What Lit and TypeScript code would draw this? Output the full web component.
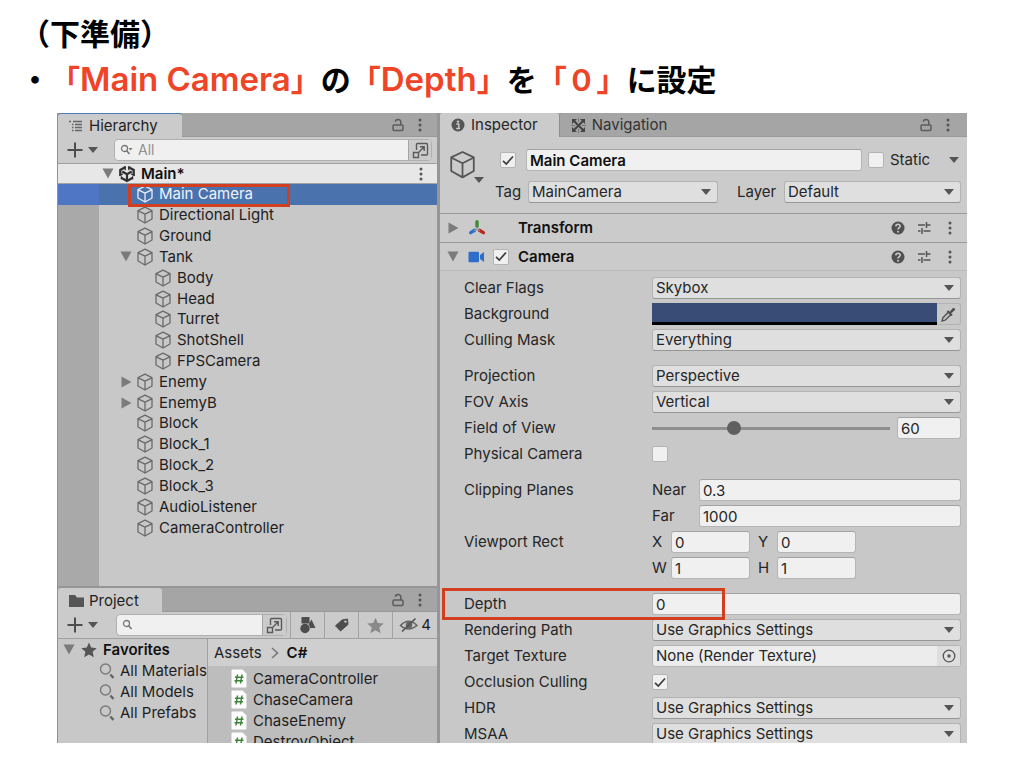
import { LitElement, html, svg, css, nothing } from "lit";
import { customElement, property } from "lit/decorators.js";
import { classMap } from "lit/directives/class-map.js";
import { styleMap } from "lit/directives/style-map.js";

/* ---------- icons ---------- */

const icon = (w: number, h: number, body: unknown, box = `0 0 ${w} ${h}`) =>
  html`<svg width=${w} height=${h} viewBox=${box} aria-hidden="true">${body}</svg>`;

const cube = (size: number, color: string, w = 1.3) =>
  icon(size, size, svg`<path d="M9 1.2 16 4.6V13L9 17 2 13V4.6ZM2.2 4.8 9 8.2 15.8 4.8M9 8.2V16.8" fill="none" stroke=${color} stroke-width=${w} stroke-linejoin="round"/>`, "0 0 18 18");
const caretDown = () => icon(10, 6, svg`<path d="M0 0H10L5 6Z" fill="#555"/>`);
const foldOpen = () => icon(12, 11, svg`<path d="M0.500 0.500H11.500L6 10.500Z" fill="#7b7b7b"/>`);
const foldShut = () => icon(11, 12, svg`<path d="M0.500 0.500V11.500L10.500 6Z" fill="#7b7b7b"/>`);
const lock = () => icon(12, 14, svg`<rect x="1" y="7" width="10" height="5.600" rx="1" fill="none" stroke="#5c5c5c" stroke-width="1.500"/><path d="M3.300 3.800C3.500 1 8.800.6 8.800 3.800V7" fill="none" stroke="#5c5c5c" stroke-width="1.500"/>`);
const dots = () => icon(4, 14, svg`<g fill="#555"><circle cx="2" cy="2" r="1.500"/><circle cx="2" cy="7" r="1.500"/><circle cx="2" cy="12" r="1.500"/></g>`);
const listIcon = () => icon(14, 12, svg`<path d="M0 1.500H2M4 1.500H13M3 4.500H4.500M6 4.500H13M3 7.500H4.500M6 7.500H13M3 10.500H4.500M6 10.500H13" stroke="#666" stroke-width="1.300"/>`);
const folder = () => icon(17, 14, svg`<path d="M1 1H7L9 3.500H16V13H1Z" fill="#555"/>`);
const plus = () => icon(16, 16, svg`<path d="M8 .5V15.500M.5 8H15.500" stroke="#4d4d4d" stroke-width="2"/>`);
const smallSearch = (menu: boolean) => icon(13, 12, svg`<circle cx="4.500" cy="4.500" r="3" fill="none" stroke="#777" stroke-width="1.300"/><path d="M6.600 6.800 9.600 10" stroke="#777" stroke-width="1.600"/>${menu ? svg`<path d="M8.500 4H12.500L10.500 6.500Z" fill="#777"/>` : nothing}`);
const bigSearch = () => icon(17, 17, svg`<circle cx="6.500" cy="7" r="5" fill="none" stroke="#7a7a7a" stroke-width="1.400"/><path d="M11.300 12.500 14.500 15.800" stroke="#666" stroke-width="2.400"/>`);
const popOut = () => icon(17, 17, svg`<path d="M4.500 8V2.500Q4.500 1.500 5.500 1.500H14.500Q15.500 1.500 15.500 2.500V12Q15.500 13 14.500 13H9M1.500 10.500H6.500V15.500H1.500ZM7 10 12 5M8 4.800H12.200V9" fill="none" stroke="#5a5a5a" stroke-width="1.400"/>`);
const unity = () => icon(18, 18, svg`<path d="M9 9.200V15M9 9.200 4.300 6.500M9 9.200 13.700 6.500" fill="none" stroke="#2f2f2f" stroke-width="2.200"/><path d="M7.600 2 2.300 5V10.400M10.400 2 15.700 5V10.400M3.200 12.700 9 16 14.800 12.700" fill="none" stroke="#2f2f2f" stroke-width="2.300"/><path d="M7.200 1.200V5.200M10.800 1.200V5.200M1.300 10.800 4.800 8.900M16.700 10.800 13.200 8.900M3.400 14.200V11.200M14.600 14.200V11.200" stroke="#2f2f2f" stroke-width="1.300"/>`);
const star = (size: number, color: string) => icon(size, size, svg`<path d="M8 .6 10.200 5.600 15.700 6.200 11.600 9.800 12.800 15.200 8 12.400 3.200 15.200 4.400 9.800.3 6.200 5.800 5.600Z" fill=${color}/>`, "0 0 16 16");
const info = () => icon(14, 14, svg`<circle cx="7" cy="7" r="6.500" fill="#555"/><circle cx="7" cy="3.600" r="1.200" fill="#cbcbcb"/><path d="M5.300 6H7.800V10.300M5.200 10.500H9" fill="none" stroke="#cbcbcb" stroke-width="1.400"/>`);
const navIcon = () => icon(15, 15, svg`<path d="M1 1H6L1 6ZM14 1V6L9 1ZM1 14V9L6 14ZM14 14H9L14 9Z" fill="#444"/><path d="M3 3 12 12M12 3 3 12" stroke="#444" stroke-width="2"/><path d="M7.500 0V4M7.500 11V15M0 7.500H4M11 7.500H15" stroke="#777" stroke-width="1"/>`);
const help = () => icon(14, 14, svg`<circle cx="7" cy="7" r="6.500" fill="#505050"/><path d="M4.800 5.400C4.900 2.600 9.300 2.700 9.200 5.200 9.100 6.700 7 6.700 7 8.600" fill="none" stroke="#cbcbcb" stroke-width="1.600"/><circle cx="7" cy="10.800" r="1" fill="#cbcbcb"/>`);
const presets = () => icon(14, 14, svg`<path d="M1 4H8M11 4H13.500M9.500 1V7M1 10H3.500M6.500 10H13.500M5 7V13M11 4H9" stroke="#555" stroke-width="1.500"/>`);
const axes = () => icon(18, 18, svg`<g stroke-width="3.400" stroke-linecap="round"><path d="M9 2.800V7.300" stroke="#3f8a34"/><path d="M6.600 11.300 2.700 13.600" stroke="#2f6fd0"/><path d="M11.400 11.300 15.400 13.600" stroke="#b72a22"/></g><path d="M9 8V10L6 11.700M9 10 12 11.700" stroke="#999" fill="none" stroke-width="1.200"/>`);
const cam = () => icon(17, 12, svg`<rect x=".5" y=".8" width="10.500" height="10.400" rx="1" fill="#2f6dcb"/><path d="M12 4 16 1V11L12 8Z" fill="#2f6dcb"/>`);
const tick = () => icon(12, 11, svg`<path d="M1 5.800 4.300 9 11 1.500" fill="none" stroke="#3c3c3c" stroke-width="1.700"/>`);
const dropper = () => icon(15, 15, svg`<path d="M1 14 2 10.500 7.500 5 10 7.500 4.500 13Z" fill="#bdbdbd" stroke="#4f4f4f" stroke-width="1.300"/><path d="M6.500 4 11 8.500M9 6 12.500 2.500" stroke="#4f4f4f" stroke-width="2"/><path d="M9.500 4 12 1Q14.500.5 14 3L11 5.500Z" fill="#4f4f4f"/>`);
const target = () => icon(14, 14, svg`<circle cx="7" cy="7" r="5.800" fill="none" stroke="#555" stroke-width="1.300"/><circle cx="7" cy="7" r="1.700" fill="#555"/>`);
const shapes = () => icon(17, 18, svg`<rect x="2.500" y="1" width="8" height="6.500" fill="#4d4d4d"/><circle cx="6" cy="12.500" r="4.700" fill="#4d4d4d"/><path d="M12.500 3.500 16.500 12H11Q10.800 9 9.500 8.500Z" fill="#4d4d4d"/>`);
const tag = () => icon(16, 16, svg`<path d="M8 3 13.500 2 14 7.500 6.500 14 1.500 8.800Z" fill="#4d4d4d" stroke="#4d4d4d" stroke-linejoin="round"/><circle cx="11.500" cy="4.600" r="1.200" fill="#cbcbcb"/>`);
const eyeOff = () => icon(20, 16, svg`<path d="M1.500 8.500Q9.500 0 18 8.500 9.500 15.500 1.500 8.500Z" fill="none" stroke="#666" stroke-width="1.600"/><circle cx="10" cy="8" r="3.300" fill="#666"/><path d="M3 14.500 16.500 1.500" stroke="#555" stroke-width="1.700"/>`);
const chevron = () => icon(9, 12, svg`<path d="M2 1 7.500 6 2 11" fill="none" stroke="#777" stroke-width="1.600"/>`);
const script = () => icon(16, 19, svg`<path d="M.5 1.500Q.5.500 1.500.500H11.500L15.500 4.500V17.500Q15.500 18.500 14.500 18.500H1.500Q.5 18.500.5 17.500Z" fill="#fdfdfd"/><path d="M6.500 5.500 5 14.500M11 5.500 9.500 14.500M4 8.300H12.500M3.500 11.700H12" stroke="#3d853a" stroke-width="1.500"/>`);

/* ---------- shared look ---------- */

const base = css`
  :host { display: block; box-sizing: border-box; }
  *, *::before, *::after { box-sizing: border-box; }
  svg { display: block; flex: none; }
  button, input, select { font: inherit; color: inherit; margin: 0; padding: 0; border: 0; background: none; border-radius: 0; outline: none; min-width: 0; }
  button { display: flex; align-items: center; justify-content: center; flex: none; }
  .tabs { display: flex; height: 24px; background: #a5a5a5; border-bottom: 1px solid #999; }
  .tab { height: 24px; background: #cbcbcb; border-radius: 3px 3px 0 0; gap: 6px; padding: 0 12px; }
  .tab.idle { background: none; color: #333; }
  .tools { display: flex; align-items: center; gap: 14px; margin-left: auto; padding-right: 15px; }
  .tick { display: grid; place-items: center; width: 16px; height: 16px; flex: none; }
  .tick > * { grid-area: 1 / 1; }
  .tick input { appearance: none; width: 16px; height: 16px; background: #f0f0f0; border: 1px solid #b4b4b4; border-radius: 2px; }
  .tick svg { pointer-events: none; }
`;

const tickBox = (id: string, label: string | null, on: boolean) => html`<span class="tick">
  <input type="checkbox" id=${id} aria-label=${label ?? nothing} .checked=${on} />${on ? tick() : nothing}</span>`;

/* ---------- hierarchy ---------- */

interface Node { name: string; depth: number; open?: boolean; }

@customElement("hierarchy-pane")
class HierarchyPane extends LitElement {
  static styles = [base, css`
    :host { background: #c8c8c8; display: flex; flex-direction: column; border-left: 1px solid #929292; min-height: 0; overflow: hidden; }
    .tab.on { border-top: 1px solid #4c7bc0; padding: 0 24px 0 11px; }
    .bar { display: flex; align-items: center; height: 27px; padding: 0 5px 0 8px; background: #cbcbcb; border-bottom: 1px solid #a0a0a0; }
    .add { gap: 5px; width: 32px; }
    .search { display: flex; align-items: center; flex: 1; height: 22px; margin-left: 16px; background: #f0f0f0; border: 1px solid #b0b0b0; border-radius: 4px; padding-left: 5px; gap: 5px; min-width: 0; }
    .search input { flex: 1; font-size: 14px; line-height: 18px; }
    .search input::placeholder { color: #909090; opacity: 1; }
    .pop { width: 23px; height: 20px; background: #cbcbcb; border-left: 1px solid #a5a5a5; border-radius: 0 4px 4px 0; }
    .tree { list-style: none; margin: 0; padding: 0; display: grid; grid-auto-rows: 1fr; height: 354px; }
    .rest { background: linear-gradient(90deg, #a9a9a9 41px, #c8c8c8 41px); flex: 1; }
    .row { position: relative; display: flex; align-items: center; height: 100%; white-space: nowrap; }
    .row.scene { height: 20px; background: #e7e7e7; border-bottom: 1px solid #a3a3a3; font-weight: 600; color: #111; padding-right: 14px; }
    .row.scene .dots { margin-left: auto; }
    .row.sel { background: linear-gradient(90deg, #4f76c4 41px, #4a72ad 41px); color: #f0f4fa; }
    .fold { width: 18px; display: flex; justify-content: center; }
    .glyph { width: 18px; margin: 0 5px 0 1px; }
    .mark { position: absolute; left: 70px; top: 0; width: 162px; height: 23px; border: 3px solid #d23f20; z-index: 1; pointer-events: none; }
  `];

  private nodes: Node[] = [
    { name: "Main Camera", depth: 1 }, { name: "Directional Light", depth: 1 }, { name: "Ground", depth: 1 },
    { name: "Tank", depth: 1, open: true }, { name: "Body", depth: 2 }, { name: "Head", depth: 2 },
    { name: "Turret", depth: 2 }, { name: "ShotShell", depth: 2 }, { name: "FPSCamera", depth: 2 },
    { name: "Enemy", depth: 1, open: false }, { name: "EnemyB", depth: 1, open: false },
    { name: "Block", depth: 1 }, { name: "Block_1", depth: 1 }, { name: "Block_2", depth: 1 },
    { name: "Block_3", depth: 1 }, { name: "AudioListener", depth: 1 }, { name: "CameraController", depth: 1 },
  ];

  render() {
    return html`
      <div class="tabs">
        <button class="tab on">${listIcon()}Hierarchy</button>
        <div class="tools"><button aria-label="Lock">${lock()}</button><button aria-label="Menu">${dots()}</button></div>
      </div>
      <div class="bar">
        <button class="add" aria-label="Create">${plus()}${caretDown()}</button>
        <div class="search">${smallSearch(true)}<input type="text" aria-label="Search hierarchy" placeholder="All" />
          <button class="pop" aria-label="Open search">${popOut()}</button></div>
      </div>
      <div class="row scene" style=${styleMap({ paddingLeft: "41px" })}>
        <span class="fold">${foldOpen()}</span><span class="glyph">${unity()}</span>Main*
        <button class="dots" aria-label="Scene menu">${dots()}</button>
      </div>
      <div class="rest"><ul class="tree">
        ${this.nodes.map((n, i) => html`<li class=${classMap({ row: true, sel: i === 0 })} style=${styleMap({ paddingLeft: `${41 + 18 * n.depth}px` })}>
          <span class="fold">${n.open === undefined ? nothing : n.open ? foldOpen() : foldShut()}</span>
          <span class="glyph">${cube(18, i === 0 ? "#e6eefa" : "#6a6a6a")}</span>${n.name}
          ${i === 0 ? html`<span class="mark"></span>` : nothing}
        </li>`)}
      </ul></div>`;
  }
}

/* ---------- project ---------- */

@customElement("project-pane")
class ProjectPane extends LitElement {
  static styles = [base, css`
    :host { background: #c8c8c8; display: flex; flex-direction: column; border-left: 1px solid #929292; min-height: 0; overflow: hidden; }
    .tab.on { padding: 2px 23px 0 10px; gap: 4px; }
    .bar { display: flex; align-items: stretch; height: 27px; padding-left: 8px; background: #cbcbcb; border-bottom: 1px solid #a0a0a0; }
    .add { gap: 5px; width: 32px; }
    .search { display: flex; align-items: center; flex: 1; height: 22px; margin: 2px 3px 0 18px; background: #f0f0f0; border: 1px solid #b0b0b0; border-radius: 4px; padding-left: 5px; min-width: 0; }
    .search input { flex: 1; }
    .pop { width: 24px; height: 20px; background: #cbcbcb; border-left: 1px solid #a5a5a5; border-radius: 0 4px 4px 0; }
    .cell { width: 34px; border-left: 1px solid #a3a3a3; }
    .cell.wide { width: 45px; gap: 2px; }
    .split { display: grid; grid-template-columns: 150px 1fr; flex: 1; min-height: 0; }
    ul { list-style: none; margin: 0; padding: 0; }
    li { display: flex; align-items: center; height: 21px; white-space: nowrap; overflow: hidden; }
    .favs { overflow: hidden; border-right: 1px solid #a0a0a0; }
    .favs li { padding-left: 41px; gap: 4px; }
    .favs li.head { padding-left: 5px; gap: 6px; font-weight: 600; color: #111; }
    .files { background: #bdbdbd; overflow: hidden; min-width: 0; }
    .crumbs { display: flex; align-items: center; gap: 8px; height: 27px; padding-left: 6px; background: #cfcfcf; color: #222; }
    .crumbs a { color: inherit; text-decoration: none; }
    .crumbs strong { font-weight: 600; color: #111; }
    .files ul { padding-top: 2px; }
    .files li { padding-left: 23px; gap: 6px; }
  `];

  render() {
    return html`
      <div class="tabs">
        <button class="tab on">${folder()}Project</button>
        <div class="tools"><button aria-label="Lock">${lock()}</button><button aria-label="Menu">${dots()}</button></div>
      </div>
      <div class="bar">
        <button class="add" aria-label="Create">${plus()}${caretDown()}</button>
        <div class="search">${smallSearch(false)}<input type="text" aria-label="Search project" />
          <button class="pop" aria-label="Open search">${popOut()}</button></div>
        <button class="cell" aria-label="Search by type">${shapes()}</button>
        <button class="cell" aria-label="Search by label">${tag()}</button>
        <button class="cell" aria-label="Save search">${star(17, "#8a8a8a")}</button>
        <button class="cell wide" aria-label="Hidden packages">${eyeOff()}4</button>
      </div>
      <div class="split">
        <ul class="favs">
          <li class="head">${foldOpen()}${star(16, "#555")}Favorites</li>
          ${["All Materials", "All Models", "All Prefabs"].map((t) => html`<li>${bigSearch()}${t}</li>`)}
        </ul>
        <div class="files">
          <nav class="crumbs"><a href="#assets">Assets</a>${chevron()}<strong>C#</strong></nav>
          <ul>${["CameraController", "ChaseCamera", "ChaseEnemy", "DestroyObject"].map((t) => html`<li>${script()}${t}</li>`)}</ul>
        </div>
      </div>`;
  }
}

/* ---------- inspector ---------- */

@customElement("inspector-pane")
class InspectorPane extends LitElement {
  static styles = [base, css`
    :host { background: #c8c8c8; min-height: 0; min-width: 0; overflow: hidden; color: #262626; }
    .tab.on { padding: 0 21px 0 11px; }
    .tab.idle { padding: 0 11px; border-left: 1px solid #8f8f8f; }
    .tools { padding-right: 17px; }
    input[type="text"] { width: 100%; height: 22px; line-height: 20px; background: #f0f0f0; border: 1px solid #b5b5b5; border-top-color: #a2a2a2; border-radius: 3px; padding: 0 3px; }
    .pick { display: grid; align-items: center; min-width: 0; flex: 1; }
    .pick > * { grid-area: 1 / 1; }
    .pick select { appearance: none; width: 100%; height: 22px; line-height: 20px; background: #dfdfdf; border: 1px solid #b3b3b3; border-bottom-color: #969696; border-radius: 3px; padding: 0 3px; }
    .pick svg { justify-self: end; margin-right: 7px; pointer-events: none; }
    .object { display: flex; gap: 12px; padding: 12px 6px 10px 8px; background: #cbcbcb; border-bottom: 1px solid #999; }
    .kind { align-items: flex-start; width: 35px; justify-content: flex-start; padding-top: 1px; }
    .kind svg + svg { align-self: flex-end; margin: 0 0 20px -3px; }
    .lines { flex: 1; display: grid; gap: 10px; min-width: 0; }
    .line { display: flex; align-items: center; gap: 5px; }
    .line.name { padding-left: 5px; }
    .name input[type="text"] { font-weight: 600; color: #111; flex: 1; margin: 0 1px 0 5px; }
    .static { display: flex; align-items: center; width: 72px; justify-content: space-between; padding: 0 2px 0 1px; }
    .line.pair { display: grid; grid-template-columns: 28px 190fr 56px 177fr; }
    .layer { padding-left: 14px; }
    .comp { display: flex; align-items: center; height: 29px; padding: 0 15px 0 4px; background: #cbcbcb; border-bottom: 1px solid #999; }
    .comp.open { height: 28px; border-bottom-color: #b9b9b9; }
    .fold { width: 18px; display: flex; justify-content: center; }
    .glyph { width: 19px; margin: 0 7px 0 5px; display: flex; justify-content: center; }
    .slot { width: 25px; }
    .comp h2 { margin: 0; font-size: inherit; font-weight: 600; color: #111; }
    .acts { display: flex; align-items: center; gap: 17px; margin-left: auto; }
    .acts button:first-child { margin-right: -5px; }
    .props { padding: 4px 6px 0 24px; }
    .group { margin-bottom: 10px; }
    .prop { position: relative; display: grid; grid-template-columns: 188px 1fr; align-items: center; height: 26px; white-space: nowrap; }
    .value { display: flex; align-items: center; min-width: 0; }
    .color { flex: 1; height: 22px; appearance: none; border-bottom: 3px solid #000; cursor: default; }
    .color::-webkit-color-swatch-wrapper { padding: 0; }
    .color::-webkit-color-swatch { border: 0; border-radius: 0; }
    .drop { width: 24px; height: 22px; border: 1px solid #b3b3b3; border-left: 0; border-radius: 0 3px 3px 0; }
    .range { appearance: none; flex: 1; height: 14px; margin-right: 7px; }
    .range::-webkit-slider-runnable-track { height: 3px; background: #8f8f8f; }
    .range::-webkit-slider-thumb { appearance: none; width: 14px; height: 14px; margin-top: -6px; border-radius: 7px; background: #5f5f5f; }
    .value input.num { width: 64px; }
    .clip { width: 47px; flex: none; }
    .axis { width: 19px; flex: none; }
    .value input.cell { width: 79px; margin-right: 8px; }
    .objref { display: flex; flex: 1; height: 22px; background: #ececec; border: 1px solid #b5b5b5; border-radius: 3px; overflow: hidden; }
    .objref input[type="text"] { border: 0; height: 20px; background: none; }
    .objref button { width: 23px; background: #dedede; }
    .mark { position: absolute; left: -22px; top: -3px; width: 283px; height: 32px; border: 3px solid #d23f20; z-index: 1; pointer-events: none; }
  `];

  private pick(id: string, value: string, label?: string) {
    return html`<span class="pick"><select id=${id} aria-label=${label ?? nothing}><option>${value}</option></select>${caretDown()}</span>`;
  }
  private prop(id: string, label: string, value: unknown) {
    return html`<div class="prop"><label for=${id}>${label}</label><div class="value">${value}</div></div>`;
  }
  private cell(id: string, name: string, v: string) {
    return html`<label class="axis" for=${id}>${name}</label><input class="cell" type="text" id=${id} .value=${v} />`;
  }
  private acts() {
    return html`<div class="acts"><button aria-label="Help">${help()}</button><button aria-label="Presets">${presets()}</button><button aria-label="Menu">${dots()}</button></div>`;
  }

  render() {
    const graphics = "Use Graphics Settings";
    return html`
      <div class="tabs">
        <button class="tab on">${info()}Inspector</button>
        <button class="tab idle">${navIcon()}Navigation</button>
        <div class="tools"><button aria-label="Lock">${lock()}</button><button aria-label="Menu">${dots()}</button></div>
      </div>
      <div class="object">
        <button class="kind" aria-label="Object icon">${cube(29, "#555", 1.1)}${caretDown()}</button>
        <div class="lines">
          <div class="line name">
            ${tickBox("active", "Active", true)}
            <input type="text" aria-label="Name" .value=${"Main Camera"} />
            ${tickBox("static", null, false)}
            <span class="static"><label for="static">Static</label><button aria-label="Static options">${caretDown()}</button></span>
          </div>
          <div class="line pair">
            <label for="tag">Tag</label>${this.pick("tag", "MainCamera")}
            <label class="layer" for="layer">Layer</label>${this.pick("layer", "Default")}
          </div>
        </div>
      </div>
      <div class="comp"><span class="fold">${foldShut()}</span><span class="glyph">${axes()}</span><span class="slot"></span><h2>Transform</h2>${this.acts()}</div>
      <div class="comp open"><span class="fold">${foldOpen()}</span><span class="glyph">${cam()}</span><span class="slot">${tickBox("enabled", "Camera enabled", true)}</span><h2>Camera</h2>${this.acts()}</div>
      <div class="props">
        <div class="group">
          ${this.prop("clear", "Clear Flags", this.pick("clear", "Skybox"))}
          ${this.prop("bg", "Background", html`<input class="color" type="color" id="bg" value="#394c76" /><button class="drop" aria-label="Pick colour">${dropper()}</button>`)}
          ${this.prop("mask", "Culling Mask", this.pick("mask", "Everything"))}
        </div>
        <div class="group">
          ${this.prop("proj", "Projection", this.pick("proj", "Perspective"))}
          ${this.prop("axis", "FOV Axis", this.pick("axis", "Vertical"))}
          ${this.prop("fov", "Field of View", html`<input class="range" type="range" id="fov" min="0" max="179" value="60" /><input class="num" type="text" aria-label="Field of View value" .value=${"60"} />`)}
          ${this.prop("phys", "Physical Camera", tickBox("phys", null, false))}
        </div>
        <div class="group">
          ${this.prop("near", "Clipping Planes", html`<label class="clip" for="near">Near</label><input type="text" id="near" .value=${"0.3"} />`)}
          ${this.prop("far", "", html`<label class="clip" for="far">Far</label><input type="text" id="far" .value=${"1000"} />`)}
          ${this.prop("vx", "Viewport Rect", html`${this.cell("vx", "X", "0")}${this.cell("vy", "Y", "0")}`)}
          ${this.prop("vw", "", html`${this.cell("vw", "W", "1")}${this.cell("vh", "H", "1")}`)}
        </div>
        <div class="group">
          ${this.prop("depth", "Depth", html`<input type="text" id="depth" .value=${"0"} /><span class="mark"></span>`)}
          ${this.prop("path", "Rendering Path", this.pick("path", graphics))}
          ${this.prop("tex", "Target Texture", html`<span class="objref"><input type="text" id="tex" .value=${"None (Render Texture)"} /><button aria-label="Select texture">${target()}</button></span>`)}
          ${this.prop("occ", "Occlusion Culling", tickBox("occ", null, true))}
          ${this.prop("hdr", "HDR", this.pick("hdr", graphics))}
          ${this.prop("msaa", "MSAA", this.pick("msaa", graphics))}
        </div>
      </div>`;
  }
}

/* ---------- slide ---------- */

@customElement("app-root")
class AppRoot extends LitElement {
  @property() product = "Main Camera";

  static styles = css`
    :host { display: flex; flex-direction: column; box-sizing: border-box; height: 100vh; background: #fff; overflow: hidden; }
    .text { padding: 9px 20px 12px; font: 700 30px/46px "Noto Sans CJK JP", sans-serif; color: #000; text-spacing-trim: space-all; }
    .text p { margin: 0; white-space: nowrap; }
    .text em { font-style: normal; color: #ee4427; }
    .latin { font-family: Inter, sans-serif; font-weight: 600; font-size: 33px; line-height: 1; }
    .editor { flex: 1; min-height: 0; margin: 0 57px 25px; display: grid; grid-template-columns: 380fr 527fr; column-gap: 3px; background: #969696; font: 400 15px/20px Inter, sans-serif; color: #1e1e1e; overflow: hidden; }
    .side { display: grid; grid-template-rows: 1fr 155px; row-gap: 2px; min-width: 0; min-height: 0; }
  `;

  render() {
    return html`
      <div class="text">
        <p>（下準備）</p>
        <p>・<em>「<span class="latin">${this.product}</span>」</em>の<em>「<span class="latin">Depth</span>」</em>を<em>「０」</em>に設定</p>
      </div>
      <div class="editor">
        <div class="side"><hierarchy-pane></hierarchy-pane><project-pane></project-pane></div>
        <inspector-pane></inspector-pane>
      </div>`;
  }
}
